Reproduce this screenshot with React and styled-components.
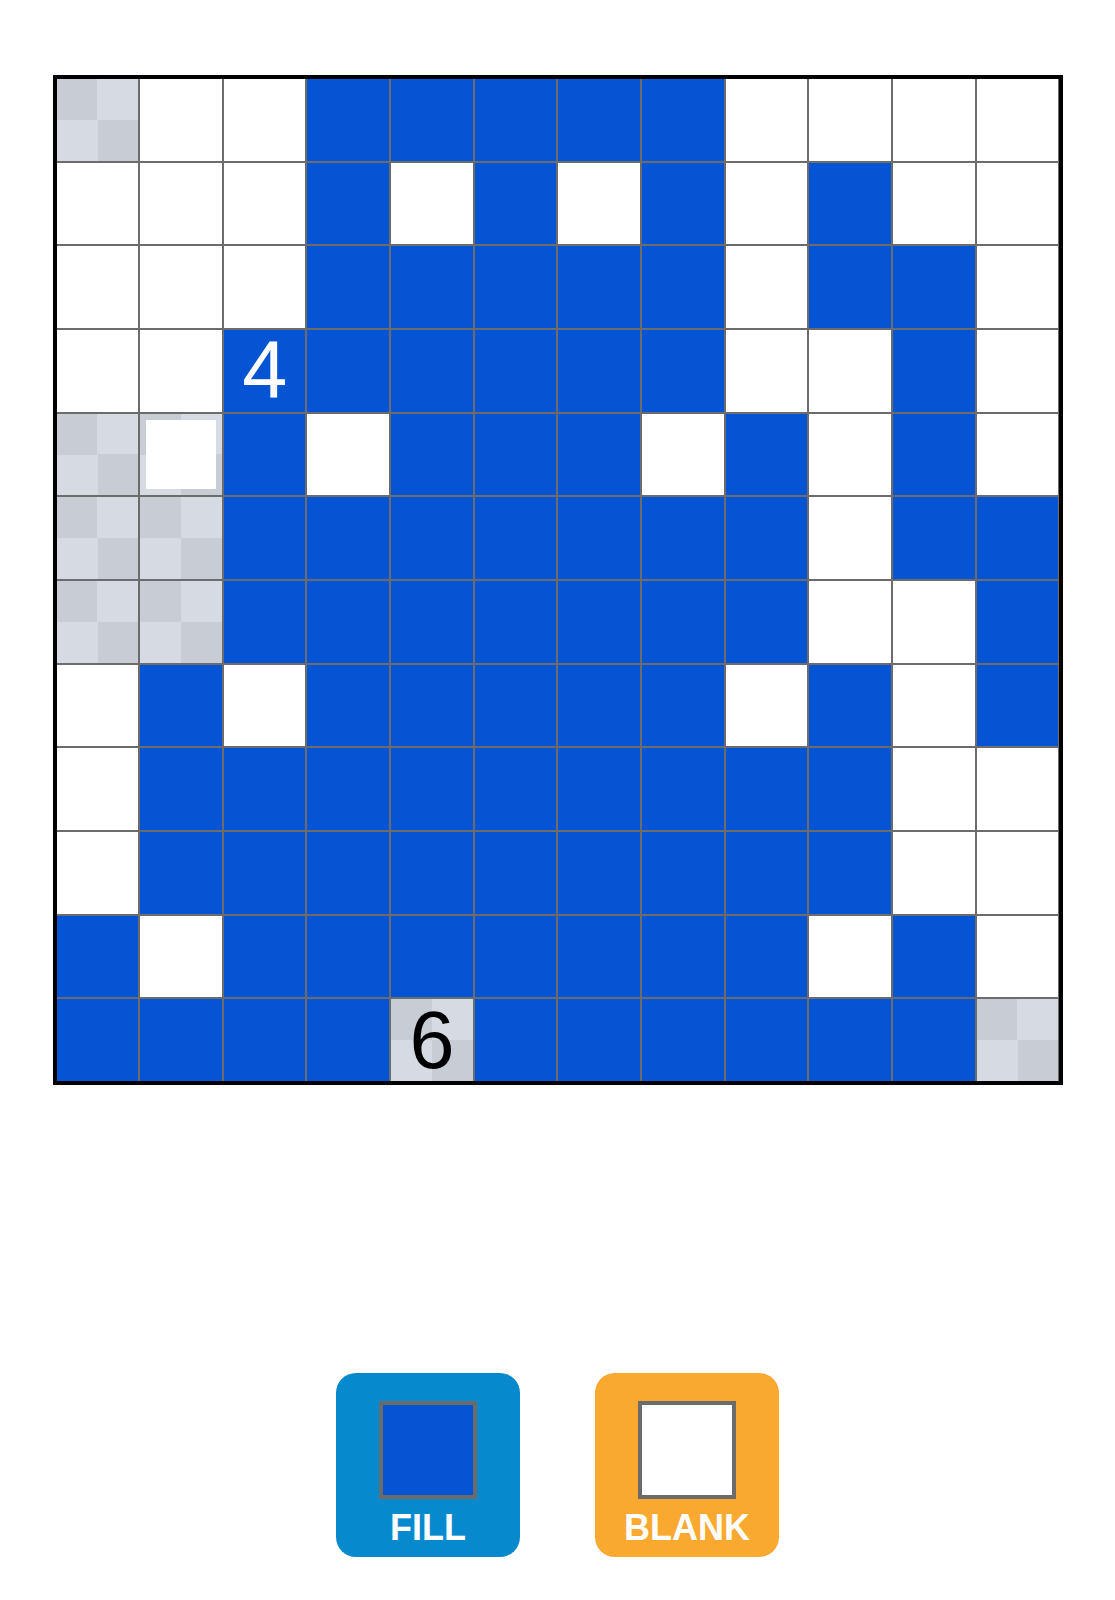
import React from "react";
import styled, { createGlobalStyle, css } from "styled-components";

const GlobalStyle = createGlobalStyle`
  html, body { margin: 0; padding: 0; background: #ffffff; }
  body { font-family: "Liberation Sans", Arial, sans-serif; }
  * { box-sizing: border-box; }
`;

const BLUE = "#0554d3";
const LIGHT = "#d6dae2";
const DARK = "#c8ccd4";

const Page = styled.div`
  width: 1115px;
  min-height: 1600px;
  padding-top: 75px;
  display: flex;
  flex-direction: column;
  align-items: center;
`;

const Board = styled.div`
  width: 1010px;
  height: 1010px;
  border: 4px solid #000;
  background: #6c6c6c;
  display: grid;
  grid-template-columns: repeat(12, 1fr);
  grid-template-rows: repeat(12, 1fr);
  gap: 2px;
`;

const checker = css`
  background: conic-gradient(${LIGHT} 0 25%, ${DARK} 0 50%, ${LIGHT} 0 75%, ${DARK} 0);
`;

const Cell = styled.div`
  position: relative;
  display: flex;
  align-items: center;
  justify-content: center;
  font-family: "Liberation Sans", Arial, sans-serif;
  font-size: 81px;
  line-height: 1;
  color: ${(p) => (p.$kind === "B" ? "#ffffff" : "#000000")};
  background: ${(p) => (p.$kind === "B" ? BLUE : "#ffffff")};
  ${(p) => (p.$kind === "G" || p.$kind === "H") && checker}
`;

const Inner = styled.div`
  position: absolute;
  inset: 6px;
  background: #ffffff;
  border-radius: 1px;
`;

const Toolbar = styled.div`
  margin-top: 288px;
  display: flex;
  gap: 75px;
`;

const ToolButton = styled.div`
  width: 184px;
  height: 184px;
  border-radius: 20px;
  background: ${(p) => p.$bg};
  display: flex;
  flex-direction: column;
  align-items: center;
  padding-top: 28px;
`;

const Swatch = styled.div`
  width: 98px;
  height: 98px;
  border: 4px solid #6b6b6b;
  background: ${(p) => p.$fill};
`;

const Label = styled.div`
  margin-top: 11px;
  font-family: "Liberation Sans", Arial, sans-serif;
  font-weight: 700;
  font-size: 36px;
  line-height: 1;
  color: #ffffff;
`;

const rows = [
  "GWWBBBBBWWWW",
  "WWWBWBWBWBWW",
  "WWWBBBBBWBBW",
  "WWBBBBBBWWBW",
  "GHBWBBBWBWBW",
  "GGBBBBBBBWBB",
  "GGBBBBBBBWWB",
  "WBWBBBBBWBWB",
  "WBBBBBBBBBWW",
  "WBBBBBBBBBWW",
  "BWBBBBBBBWBW",
  "BBBBGBBBBBBG",
];

const labels = { "3-2": "4", "11-4": "6" };

export default function App() {
  return (
    <>
      <GlobalStyle />
      <Page>
        <Board>
          {rows.map((row, r) =>
            row.split("").map((k, c) => (
              <Cell key={`${r}-${c}`} $kind={k}>
                {k === "H" && <Inner />}
                {labels[`${r}-${c}`]}
              </Cell>
            ))
          )}
        </Board>
        <Toolbar>
          <ToolButton $bg="#0789cd">
            <Swatch $fill={BLUE} />
            <Label>FILL</Label>
          </ToolButton>
          <ToolButton $bg="#f9a830">
            <Swatch $fill="#ffffff" />
            <Label>BLANK</Label>
          </ToolButton>
        </Toolbar>
      </Page>
    </>
  );
}
